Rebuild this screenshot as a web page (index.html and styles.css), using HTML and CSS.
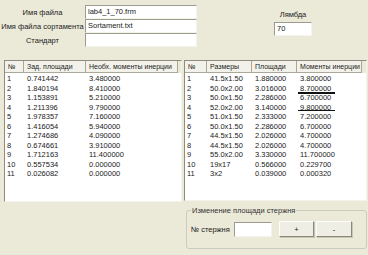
FILE: index.html
```html
<!DOCTYPE html>
<html lang="ru">
<head>
  <meta charset="UTF-8" />
  <title>Lab 4</title>
  <link rel="stylesheet" href="styles.css">
</head>
<body>

  <div class="top">
    <div class="files">
      <div class="field"><label>Имя файла</label><input type="text" value="lab4_1_70.frm"></div>
      <div class="field"><label>Имя файла сортамента</label><input type="text" value="Sortament.txt"></div>
      <div class="field"><label>Стандарт</label><input type="text" value=""></div>
    </div>
    <div class="lambda">
      <label>Лямбда</label>
      <input type="text" value="70">
    </div>
  </div>

  <div class="main">
    <div class="list left">
      <div class="head">
        <span class="c1">№</span><span class="c2">Зад. площади</span><span class="c3">Необх. моменты инерции</span>
      </div>
      <div class="rows" id="leftRows"></div>
    </div>

    <div class="right">
      <div class="list">
        <div class="head">
          <span class="r1">№</span><span class="r2">Размеры</span><span class="r3">Площади</span><span class="r4">Моменты инерции</span>
        </div>
        <div class="rows" id="rightRows"></div>
      </div>

      <fieldset class="group">
        <legend>Изменение площади стержня</legend>
        <div class="ctrl">
          <label>№ стержня</label>
          <input type="text" class="num">
          <button class="btn">+</button>
          <button class="btn">-</button>
        </div>
      </fieldset>
    </div>
  </div>

  <script>
    const areas = [
      ['0.741442', '3.480000'], ['1.840194', '8.410000'], ['1.153891', '5.210000'],
      ['1.211396', '9.790000'], ['1.978357', '7.160000'], ['1.416054', '5.940000'],
      ['1.274686', '4.090000'], ['0.674661', '3.910000'], ['1.712163', '11.400000'],
      ['0.557534', '0.000000'], ['0.026082', '0.000000']
    ];

    const profiles = [
      ['41.5x1.50', '1.880000', '3.800000'], ['50.0x2.00', '3.016000', '8.700000'],
      ['50.0x1.50', '2.286000', '6.700000'], ['52.0x2.00', '3.140000', '9.800000'],
      ['51.0x1.50', '2.333000', '7.200000'], ['50.0x1.50', '2.286000', '6.700000'],
      ['44.5x1.50', '2.026000', '4.700000'], ['44.5x1.50', '2.026000', '4.700000'],
      ['55.0x2.00', '3.330000', '11.700000'], ['19x17', '0.566000', '0.229700'],
      ['3x2', '0.039000', '0.000320']
    ];

    const leftRows = document.getElementById('leftRows');
    const rightRows = document.getElementById('rightRows');

    areas.forEach((a, i) => {
      leftRows.innerHTML += `
        <div class="row"><span class="c1">${i + 1}</span><span class="c2">${a[0]}</span><span class="c3">${a[1]}</span></div>`;
    });

    profiles.forEach((p, i) => {
      let mark = '';
      if (i === 1) mark = ' mark';
      if (i === 3) mark = ' mark low';
      rightRows.innerHTML += `
        <div class="row"><span class="r1">${i + 1}</span><span class="r2">${p[0]}</span><span class="r3">${p[1]}</span><span class="r4"><i class="val${mark}">${p[2]}</i></span></div>`;
    });
  </script>
</body>
</html>
```

FILE: styles.css
```css
* { box-sizing: border-box; }
body {
  margin: 0;
  width: 368px;
  height: 255px;
  overflow: hidden;
  background: #ebe9d8;
  font-family: Tahoma, 'Liberation Sans', sans-serif;
  font-size: 7.5px;
  color: #222;
}

input {
  font: inherit;
  line-height: 11px;
  color: #222;
  background: white;
  border: 1px solid;
  border-color: #9d9b8e #f4f3ec #f4f3ec #9d9b8e;
  padding: 0 2px 1px;
  outline: none;
}

/* top fields */
.top { display: flex; height: 60px; padding-top: 5px; }
.files { display: flex; flex-direction: column; }
.field { display: flex; align-items: center; height: 14px; }
.field label { width: 85px; text-align: center; }
.field input { width: 112px; height: 14px; }

.lambda {
  margin-left: 77px;
  padding-top: 5px;
  display: flex;
  flex-direction: column;
  align-items: center;
}
.lambda input { width: 38px; height: 14px; margin-top: 3px; }

/* lists */
.main { display: flex; padding-left: 4px; }
.list {
  background: white;
  border: 1px solid;
  border-color: #8e8c80 #f4f3ec #f4f3ec #8e8c80;
  overflow: hidden;
}
.left { width: 178px; height: 142px; }
.right { margin-left: 2px; width: 183px; display: flex; flex-direction: column; }
.right .list { height: 141px; }

.head { display: flex; height: 12px; background: #ebe9d8; }
.head span {
  background: #f3f2ea;
  border-right: 1px solid #aca899;
  border-bottom: 1px solid #aca899;
  font-size: 7px;
  line-height: 11px;
  padding-left: 3px;
  white-space: nowrap;
  overflow: hidden;
}
.rows { padding-top: 1px; }
.row { display: flex; height: 9.5px; line-height: 9.5px; }
.row span { padding-left: 3px; white-space: nowrap; }
.row .c1, .row .r1 { padding-left: 2px; }

.c1 { width: 19px; }
.c2 { width: 62px; }
.c3 { width: 92px; }
.r1 { width: 22px; }
.r2 { width: 45px; }
.r3 { width: 45px; }
.r4 { width: 65px; }

.val { font-style: normal; position: relative; }
.mark::after {
  content: '';
  position: absolute;
  left: -2px;
  width: 37px;
  bottom: -1px;
  height: 1.5px;
  background: #111;
}
.mark.low::after { bottom: 0.5px; }

/* group box */
.group {
  margin: 5px 0 0 2px;
  padding: 0 4px;
  width: 181px;
  height: 43px;
  border: 1px solid #cdcbbd;
  border-radius: 3px;
}
.group legend { padding: 0 1px; color: #333; }
.ctrl { display: flex; align-items: center; margin-top: 6px; }
.ctrl label { width: 43px; }
.num { width: 38px; height: 15px; }
.btn {
  font: inherit;
  color: #222;
  margin-left: 7px;
  width: 35px;
  height: 16px;
  padding: 0;
  background: #efeee4;
  border: 1px solid;
  border-color: #fdfdfb #8a8878 #8a8878 #fdfdfb;
  box-shadow: 1px 1px 0 #c8c6b6;
}
.btn + .btn { margin-left: 2px; width: 36px; }
```
